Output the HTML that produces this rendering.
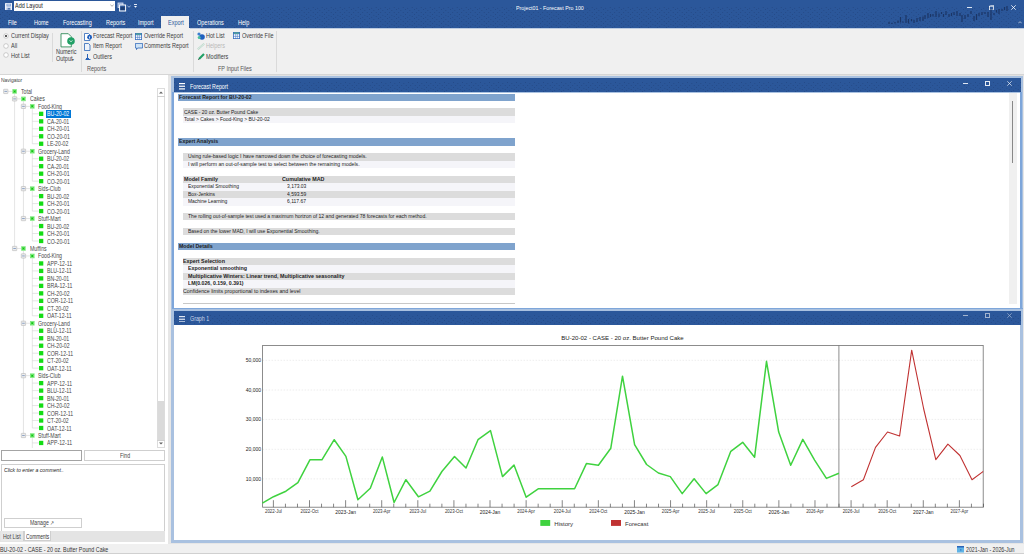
<!DOCTYPE html>
<html><head><meta charset="utf-8">
<style>
*{box-sizing:border-box;margin:0;padding:0}
html,body{width:1024px;height:554px;overflow:hidden;background:#f0f0f0;font-family:"Liberation Sans",sans-serif;color:#222}
.a{position:absolute;white-space:nowrap}
#top{left:0;top:0;width:1024px;height:28px;background:#2b579a}
#ribbon{left:0;top:28px;width:1024px;height:47px;background:#f0f0f0;border-bottom:1px solid #d6d6d6}
.tab{color:#fff;font-size:6.5px;top:18.6px;line-height:7px;transform:scaleX(.845);transform-origin:0 50%}
.rt{font-size:6.5px;color:#3c3c3c;line-height:7px;transform:scaleX(.845);transform-origin:0 50%}
#nav{left:0;top:75px;width:168px;height:469px;background:#fff}
#mdi{left:168px;top:75px;width:856px;height:470px;background:#e6e6e6}
.win{background:#fff}
.wt{background:#2b579a}
#status{left:0;top:544px;width:1024px;height:10px;background:#f0f0f0;border-bottom:1px solid #d0d0d0}
.tr{font-size:6.5px;color:#474747;line-height:7px;transform:scaleX(.8);transform-origin:0 50%}
.sq{width:4px;height:4px;background:#22dd22}
</style></head><body>
<div class="a" id="top"></div>
<svg class="a" style="left:0;top:0" width="1024" height="28" viewBox="0 0 1024 28"><defs><pattern id="dots" x="0" y="0" width="9" height="9" patternUnits="userSpaceOnUse"><g fill="#1d3a6e" fill-opacity="0.55"><circle cx="0.5" cy="0.5" r="0.5"/><circle cx="4.9" cy="1.4" r="0.5"/><circle cx="2.7" cy="3.5" r="0.5"/><circle cx="7.2" cy="3.4" r="0.5"/><circle cx="0.5" cy="5.4" r="0.5"/><circle cx="4.9" cy="6.3" r="0.5"/><circle cx="2.7" cy="8.3" r="0.5"/><circle cx="7.2" cy="7.6" r="0.5"/></g></pattern></defs><rect x="0" y="7" width="1024" height="21" fill="url(#dots)"/></svg>
<!-- title row -->
<svg class="a" style="left:4.6px;top:2.8px" width="7.3" height="7.1" viewBox="0 0 7.3 7.1"><rect x="0" y="0" width="7.3" height="7.1" rx="0.6" fill="#eef2fa"/><rect x="1.5" y="0.7" width="4.4" height="2.8" fill="#7f9fd3"/><rect x="2.2" y="1.3" width="3" height="1.2" fill="#c8d6ef"/><rect x="1.5" y="4.6" width="4.3" height="2.5" fill="#9fb5dd"/><rect x="3.2" y="5.2" width="1.6" height="1.2" fill="#2b579a"/></svg>
<div class="a" style="left:14px;top:1px;width:101px;height:10px;background:#fff"></div>
<div class="a" style="left:15.2px;top:2.2px;font-size:6.5px;line-height:7px;color:#222;transform:scaleX(.845);transform-origin:0 50%">Add Layout</div>
<svg class="a" style="left:109.5px;top:4px" width="4" height="3" viewBox="0 0 4 3"><path d="M0.3 0.5 L2 2.3 L3.7 0.5" fill="none" stroke="#777" stroke-width="0.6"/></svg>
<svg class="a" style="left:116.5px;top:1.5px" width="10" height="10" viewBox="0 0 10 10"><rect x="1" y="1" width="5" height="4.5" fill="#7f9dd0" stroke="#dfe7f5" stroke-width="0.8"/><rect x="2.6" y="3" width="6" height="6" fill="#2b579a" stroke="#fff" stroke-width="1"/><rect x="3.6" y="5" width="4" height="3" fill="#1d3f75"/></svg>
<svg class="a" style="left:127px;top:4.5px" width="4" height="3" viewBox="0 0 4 3"><path d="M0.3 0.5 L2 2.3 L3.7 0.5" fill="none" stroke="#c8d6ee" stroke-width="0.7"/></svg>
<div class="a" style="left:134.3px;top:4.2px;width:2.3px;height:0.6px;background:#e0e8f5"></div>
<svg class="a" style="left:134px;top:5.5px" width="3" height="2" viewBox="0 0 3 2"><path d="M0 0 H3 L1.5 1.8Z" fill="#fff"/></svg>
<div class="a" style="left:516px;top:3.7px;font-size:6.1px;line-height:7px;color:#fff;transform:scaleX(.87);transform-origin:0 50%">Project01 - Forecast Pro 100</div>
<!-- spark decoration -->
<svg class="a" style="left:886px;top:4px" width="126" height="24" viewBox="0 0 126 24"><rect x="2.4" y="18.0" width="1.2" height="2.0" fill="#1b3566"/><rect x="5.4" y="18.8" width="1.2" height="1.2" fill="#1b3566"/><rect x="8.4" y="18.0" width="1.2" height="1.5" fill="#1b3566"/><rect x="11.4" y="16.5" width="1.2" height="2.5" fill="#1b3566"/><rect x="13.9" y="13.0" width="1.2" height="5.5" fill="#1b3566"/><rect x="16.4" y="17.5" width="1.2" height="1.3" fill="#1b3566"/><rect x="19.4" y="11.0" width="1.2" height="8.0" fill="#1b3566"/><rect x="21.9" y="15.0" width="1.2" height="4.5" fill="#1b3566"/><rect x="24.9" y="15.0" width="1.2" height="2.0" fill="#1b3566"/><rect x="27.4" y="16.0" width="1.2" height="3.0" fill="#1b3566"/><rect x="30.4" y="14.0" width="1.2" height="4.0" fill="#1b3566"/><rect x="33.4" y="13.0" width="1.2" height="4.0" fill="#1b3566"/><rect x="36.4" y="12.5" width="1.2" height="4.5" fill="#1b3566"/><rect x="38.4" y="11.0" width="1.2" height="4.0" fill="#1b3566"/><rect x="41.4" y="9.0" width="1.2" height="5.0" fill="#1b3566"/><rect x="43.9" y="10.0" width="1.2" height="3.0" fill="#1b3566"/><rect x="46.4" y="10.0" width="1.2" height="2.5" fill="#1b3566"/><rect x="49.4" y="7.0" width="1.2" height="6.0" fill="#1b3566"/><rect x="52.4" y="9.5" width="1.2" height="3.5" fill="#1b3566"/><rect x="54.9" y="8.0" width="1.2" height="2.0" fill="#1b3566"/><rect x="56.9" y="10.0" width="1.2" height="3.0" fill="#1b3566"/><rect x="59.4" y="7.0" width="1.2" height="4.0" fill="#1b3566"/><rect x="62.4" y="10.0" width="1.2" height="3.0" fill="#1b3566"/><rect x="64.9" y="9.0" width="1.2" height="3.0" fill="#1b3566"/><rect x="67.4" y="8.0" width="1.2" height="3.0" fill="#1b3566"/><rect x="70.4" y="7.0" width="1.2" height="5.0" fill="#1b3566"/><rect x="73.4" y="9.0" width="1.2" height="3.0" fill="#1b3566"/><rect x="75.4" y="11.0" width="1.2" height="7.0" fill="#1b3566"/><rect x="78.4" y="11.0" width="1.2" height="4.0" fill="#1b3566"/><rect x="81.4" y="10.0" width="1.2" height="3.0" fill="#1b3566"/><rect x="84.4" y="7.0" width="1.2" height="3.0" fill="#1b3566"/><rect x="87.4" y="12.0" width="1.2" height="5.0" fill="#1b3566"/><rect x="89.9" y="10.0" width="1.2" height="6.0" fill="#1b3566"/><rect x="92.4" y="9.0" width="1.2" height="3.0" fill="#1b3566"/><rect x="95.4" y="8.0" width="1.2" height="3.0" fill="#1b3566"/><rect x="98.4" y="8.0" width="1.2" height="2.0" fill="#1b3566"/><rect x="101.4" y="8.0" width="1.2" height="5.0" fill="#1b3566"/><rect x="104.4" y="5.0" width="1.2" height="11.0" fill="#1b3566"/><rect x="107.4" y="9.0" width="1.2" height="2.0" fill="#1b3566"/><rect x="109.9" y="6.0" width="1.2" height="2.5" fill="#1b3566"/><rect x="112.4" y="5.0" width="1.2" height="5.0" fill="#1b3566"/><rect x="115.4" y="5.0" width="1.2" height="2.0" fill="#1b3566"/><rect x="117.9" y="3.0" width="1.2" height="3.0" fill="#1b3566"/><rect x="120.4" y="2.0" width="1.2" height="5.0" fill="#1b3566"/></svg>
<!-- window controls -->
<div class="a" style="left:967px;top:7px;width:5px;height:0.8px;background:#dde6f3"></div>
<svg class="a" style="left:988.8px;top:4.8px" width="5.5" height="5.5" viewBox="0 0 5.5 5.5"><rect x="0.4" y="1.2" width="3.9" height="3.9" fill="none" stroke="#fff" stroke-width="0.75"/><path d="M1.3 0.4 H5.1 V4.2" fill="none" stroke="#fff" stroke-width="0.6"/></svg>
<svg class="a" style="left:1010.5px;top:5px" width="5" height="5" viewBox="0 0 5 5"><path d="M0.3 0.3 L4.7 4.7 M4.7 0.3 L0.3 4.7" stroke="#fff" stroke-width="0.8"/></svg>
<svg class="a" style="left:1017.5px;top:20.5px" width="4" height="3" viewBox="0 0 4 3"><path d="M0.3 2.3 L2 0.6 L3.7 2.3" fill="none" stroke="#fff" stroke-width="0.6"/></svg>
<!-- tabs -->
<div class="a" style="left:160.9px;top:15.8px;width:28.6px;height:13px;background:#f0f0f0"></div>
<div class="a tab" style="left:7.6px">File</div>
<div class="a tab" style="left:34px">Home</div>
<div class="a tab" style="left:63px">Forecasting</div>
<div class="a tab" style="left:105.7px">Reports</div>
<div class="a tab" style="left:138px">Import</div>
<div class="a tab" style="left:168px;color:#2b579a">Export</div>
<div class="a tab" style="left:197px">Operations</div>
<div class="a tab" style="left:237.5px">Help</div>

<div class="a" id="ribbon"></div>
<div class="a" style="left:0;top:28px;width:160.9px;height:0.5px;background:#bccbe0"></div>
<div class="a" style="left:189.5px;top:28px;width:835px;height:0.5px;background:#bccbe0"></div>
<!-- radios -->
<svg class="a" style="left:3.2px;top:32.9px" width="6" height="6" viewBox="0 0 6 6"><circle cx="3" cy="3" r="2.3" fill="#fff" stroke="#a0a0a0" stroke-width="0.5"/><circle cx="3" cy="3" r="1" fill="#222"/></svg>
<svg class="a" style="left:3.2px;top:42.6px" width="6" height="6" viewBox="0 0 6 6"><circle cx="3" cy="3" r="2.3" fill="#fff" stroke="#a0a0a0" stroke-width="0.5"/></svg>
<svg class="a" style="left:3.2px;top:52.2px" width="6" height="6" viewBox="0 0 6 6"><circle cx="3" cy="3" r="2.3" fill="#fff" stroke="#a0a0a0" stroke-width="0.5"/></svg>
<div class="a rt" style="left:11.2px;top:31.9px">Current Display</div>
<div class="a rt" style="left:11.2px;top:41.7px">All</div>
<div class="a rt" style="left:11.2px;top:52.1px">Hot List</div>
<div class="a" style="left:52px;top:33px;width:0.7px;height:29px;background:#dadada"></div>
<!-- numeric output -->
<svg class="a" style="left:59.5px;top:32.5px" width="16" height="15" viewBox="0 0 16 15"><path d="M1 0.7 H8.3 L11.3 3.7 V13.9 H1 Z" fill="#fff" stroke="#1a8048" stroke-width="0.8"/><circle cx="11" cy="8" r="3.8" fill="#21a066"/><path d="M9.6 7.3 L11 8.9 L12.4 7.3" fill="none" stroke="#fff" stroke-width="0.7"/></svg>
<div class="a rt" style="left:56px;top:48.2px">Numeric</div>
<div class="a rt" style="left:56px;top:54.6px">Output<span style="font-size:4px">&#9662;</span></div>
<div class="a" style="left:80.5px;top:30.5px;width:0.7px;height:41px;background:#dadada"></div>
<!-- reports group -->
<svg class="a" style="left:84px;top:32.5px" width="9" height="8" viewBox="0 0 9 8"><path d="M0.5 0.5 H4.5 L6 2 V7.5 H0.5 Z" fill="#fff" stroke="#2b64b8" stroke-width="0.8"/><circle cx="5.6" cy="4.2" r="2.4" fill="#1f5fbf"/><rect x="5.2" y="3.4" width="0.8" height="2.1" fill="#fff"/></svg>
<div class="a rt" style="left:93px;top:31.9px">Forecast Report</div>
<svg class="a" style="left:84px;top:42.5px" width="7" height="8" viewBox="0 0 7 8"><path d="M0.5 0.5 H4.5 L6 2 V7.5 H0.5 Z" fill="#eef3fa" stroke="#2b64b8" stroke-width="0.8"/></svg>
<div class="a rt" style="left:93px;top:42.2px">Item Report</div>
<svg class="a" style="left:85px;top:53.5px" width="6" height="6" viewBox="0 0 6 6"><path d="M2.5 0 V4 M0.5 5.5 H5.5" stroke="#2b64b8" stroke-width="1"/><path d="M1 4.5 H4" stroke="#2b64b8" stroke-width="1"/></svg>
<div class="a rt" style="left:93px;top:53.2px">Outliers</div>
<svg class="a" style="left:135px;top:32.5px" width="7" height="7" viewBox="0 0 7 7"><rect x="0" y="0" width="7" height="7" fill="#3a6fc0"/><rect x="0.8" y="2.2" width="1.6" height="1.7" fill="#fff"/><rect x="2.7" y="2.2" width="1.6" height="1.7" fill="#e6eef9"/><rect x="4.6" y="2.2" width="1.6" height="1.7" fill="#fff"/><rect x="0.8" y="4.5" width="1.6" height="1.7" fill="#fff"/><rect x="2.7" y="4.5" width="1.6" height="1.7" fill="#e6eef9"/><rect x="4.6" y="4.5" width="1.6" height="1.7" fill="#fff"/><rect x="0.8" y="0.6" width="5.4" height="1" fill="#5fbf8a"/></svg>
<div class="a rt" style="left:143.8px;top:31.9px">Override Report</div>
<svg class="a" style="left:134.5px;top:43px" width="8" height="7" viewBox="0 0 8 7"><path d="M0.4 0.4 H7.6 V5 H2.5 L1.5 6.6 V5 H0.4 Z" fill="#cfe3f5" stroke="#2b64b8" stroke-width="0.8"/></svg>
<div class="a rt" style="left:143.8px;top:42.2px">Comments Report</div>
<div class="a rt" style="left:87px;top:64.8px;color:#555">Reports</div>
<div class="a" style="left:192.5px;top:30.5px;width:0.7px;height:41px;background:#dadada"></div>
<!-- FP input files -->
<svg class="a" style="left:197px;top:31.7px" width="8" height="8" viewBox="0 0 8 8"><circle cx="2" cy="2" r="1.6" fill="#3b7fd0"/><circle cx="5" cy="5" r="2.8" fill="#1f5fbf"/><circle cx="2.2" cy="5.5" r="1.5" fill="#48c0a0"/></svg>
<div class="a rt" style="left:205.8px;top:31.9px">Hot List</div>
<svg class="a" style="left:233px;top:32.2px" width="7" height="7" viewBox="0 0 7 7"><rect x="0" y="0" width="7" height="7" fill="#3a6fc0"/><rect x="0.8" y="2.2" width="1.6" height="1.7" fill="#fff"/><rect x="2.7" y="2.2" width="1.6" height="1.7" fill="#e6eef9"/><rect x="4.6" y="2.2" width="1.6" height="1.7" fill="#fff"/><rect x="0.8" y="4.5" width="1.6" height="1.7" fill="#fff"/><rect x="2.7" y="4.5" width="1.6" height="1.7" fill="#e6eef9"/><rect x="4.6" y="4.5" width="1.6" height="1.7" fill="#fff"/><rect x="0.8" y="0.6" width="5.4" height="1" fill="#5fbf8a"/></svg>
<div class="a rt" style="left:242px;top:31.9px">Override File</div>
<svg class="a" style="left:197px;top:42.8px" width="8" height="7" viewBox="0 0 8 7"><path d="M0.8 6.2 L7.2 0.8" stroke="#b9d8c9" stroke-width="1.8"/><path d="M0.8 6.2 L7.2 0.8" stroke="#e8f0ec" stroke-width="0.8"/></svg>
<div class="a rt" style="left:205.8px;top:42.2px;color:#b8b8b8">Helpers</div>
<svg class="a" style="left:197.5px;top:53px" width="7" height="7" viewBox="0 0 7 7"><path d="M1 6 L6 1" stroke="#21a066" stroke-width="2.2"/><path d="M0.3 6.7 L1.3 5.7" stroke="#333" stroke-width="1"/></svg>
<div class="a rt" style="left:205.8px;top:53px">Modifiers</div>
<div class="a rt" style="left:218.3px;top:64.8px;color:#555">FP Input Files</div>
<div class="a" style="left:276px;top:30.5px;width:0.7px;height:41px;background:#dadada"></div>


<div class="a" id="nav"></div>
<div class="a" style="left:0.8px;top:77.2px;font-size:5.9px;line-height:7px;color:#444;transform:scaleX(.84);transform-origin:0 50%">Navigator</div>
<svg class="a" style="left:0;top:86px" width="157" height="362" viewBox="0 86 157 362">
<line x1="14.60" y1="93.70" x2="14.60" y2="248.48" stroke="#d2d2d2" stroke-width="0.6"/>
<line x1="14.60" y1="98.88" x2="21.25" y2="98.88" stroke="#d2d2d2" stroke-width="0.6"/>
<line x1="23.45" y1="101.18" x2="23.45" y2="218.56" stroke="#d2d2d2" stroke-width="0.6"/>
<line x1="23.45" y1="106.36" x2="30.10" y2="106.36" stroke="#d2d2d2" stroke-width="0.6"/>
<line x1="32.30" y1="108.66" x2="32.30" y2="143.76" stroke="#d2d2d2" stroke-width="0.6"/>
<line x1="32.30" y1="113.84" x2="38.95" y2="113.84" stroke="#d2d2d2" stroke-width="0.6"/>
<line x1="32.30" y1="121.32" x2="38.95" y2="121.32" stroke="#d2d2d2" stroke-width="0.6"/>
<line x1="32.30" y1="128.80" x2="38.95" y2="128.80" stroke="#d2d2d2" stroke-width="0.6"/>
<line x1="32.30" y1="136.28" x2="38.95" y2="136.28" stroke="#d2d2d2" stroke-width="0.6"/>
<line x1="32.30" y1="143.76" x2="38.95" y2="143.76" stroke="#d2d2d2" stroke-width="0.6"/>
<line x1="23.45" y1="151.24" x2="30.10" y2="151.24" stroke="#d2d2d2" stroke-width="0.6"/>
<line x1="32.30" y1="153.54" x2="32.30" y2="181.16" stroke="#d2d2d2" stroke-width="0.6"/>
<line x1="32.30" y1="158.72" x2="38.95" y2="158.72" stroke="#d2d2d2" stroke-width="0.6"/>
<line x1="32.30" y1="166.20" x2="38.95" y2="166.20" stroke="#d2d2d2" stroke-width="0.6"/>
<line x1="32.30" y1="173.68" x2="38.95" y2="173.68" stroke="#d2d2d2" stroke-width="0.6"/>
<line x1="32.30" y1="181.16" x2="38.95" y2="181.16" stroke="#d2d2d2" stroke-width="0.6"/>
<line x1="23.45" y1="188.64" x2="30.10" y2="188.64" stroke="#d2d2d2" stroke-width="0.6"/>
<line x1="32.30" y1="190.94" x2="32.30" y2="211.08" stroke="#d2d2d2" stroke-width="0.6"/>
<line x1="32.30" y1="196.12" x2="38.95" y2="196.12" stroke="#d2d2d2" stroke-width="0.6"/>
<line x1="32.30" y1="203.60" x2="38.95" y2="203.60" stroke="#d2d2d2" stroke-width="0.6"/>
<line x1="32.30" y1="211.08" x2="38.95" y2="211.08" stroke="#d2d2d2" stroke-width="0.6"/>
<line x1="23.45" y1="218.56" x2="30.10" y2="218.56" stroke="#d2d2d2" stroke-width="0.6"/>
<line x1="32.30" y1="220.86" x2="32.30" y2="241.00" stroke="#d2d2d2" stroke-width="0.6"/>
<line x1="32.30" y1="226.04" x2="38.95" y2="226.04" stroke="#d2d2d2" stroke-width="0.6"/>
<line x1="32.30" y1="233.52" x2="38.95" y2="233.52" stroke="#d2d2d2" stroke-width="0.6"/>
<line x1="32.30" y1="241.00" x2="38.95" y2="241.00" stroke="#d2d2d2" stroke-width="0.6"/>
<line x1="14.60" y1="248.48" x2="21.25" y2="248.48" stroke="#d2d2d2" stroke-width="0.6"/>
<line x1="23.45" y1="250.78" x2="23.45" y2="435.48" stroke="#d2d2d2" stroke-width="0.6"/>
<line x1="23.45" y1="255.96" x2="30.10" y2="255.96" stroke="#d2d2d2" stroke-width="0.6"/>
<line x1="32.30" y1="258.26" x2="32.30" y2="315.80" stroke="#d2d2d2" stroke-width="0.6"/>
<line x1="32.30" y1="263.44" x2="38.95" y2="263.44" stroke="#d2d2d2" stroke-width="0.6"/>
<line x1="32.30" y1="270.92" x2="38.95" y2="270.92" stroke="#d2d2d2" stroke-width="0.6"/>
<line x1="32.30" y1="278.40" x2="38.95" y2="278.40" stroke="#d2d2d2" stroke-width="0.6"/>
<line x1="32.30" y1="285.88" x2="38.95" y2="285.88" stroke="#d2d2d2" stroke-width="0.6"/>
<line x1="32.30" y1="293.36" x2="38.95" y2="293.36" stroke="#d2d2d2" stroke-width="0.6"/>
<line x1="32.30" y1="300.84" x2="38.95" y2="300.84" stroke="#d2d2d2" stroke-width="0.6"/>
<line x1="32.30" y1="308.32" x2="38.95" y2="308.32" stroke="#d2d2d2" stroke-width="0.6"/>
<line x1="32.30" y1="315.80" x2="38.95" y2="315.80" stroke="#d2d2d2" stroke-width="0.6"/>
<line x1="23.45" y1="323.28" x2="30.10" y2="323.28" stroke="#d2d2d2" stroke-width="0.6"/>
<line x1="32.30" y1="325.58" x2="32.30" y2="368.16" stroke="#d2d2d2" stroke-width="0.6"/>
<line x1="32.30" y1="330.76" x2="38.95" y2="330.76" stroke="#d2d2d2" stroke-width="0.6"/>
<line x1="32.30" y1="338.24" x2="38.95" y2="338.24" stroke="#d2d2d2" stroke-width="0.6"/>
<line x1="32.30" y1="345.72" x2="38.95" y2="345.72" stroke="#d2d2d2" stroke-width="0.6"/>
<line x1="32.30" y1="353.20" x2="38.95" y2="353.20" stroke="#d2d2d2" stroke-width="0.6"/>
<line x1="32.30" y1="360.68" x2="38.95" y2="360.68" stroke="#d2d2d2" stroke-width="0.6"/>
<line x1="32.30" y1="368.16" x2="38.95" y2="368.16" stroke="#d2d2d2" stroke-width="0.6"/>
<line x1="23.45" y1="375.64" x2="30.10" y2="375.64" stroke="#d2d2d2" stroke-width="0.6"/>
<line x1="32.30" y1="377.94" x2="32.30" y2="428.00" stroke="#d2d2d2" stroke-width="0.6"/>
<line x1="32.30" y1="383.12" x2="38.95" y2="383.12" stroke="#d2d2d2" stroke-width="0.6"/>
<line x1="32.30" y1="390.60" x2="38.95" y2="390.60" stroke="#d2d2d2" stroke-width="0.6"/>
<line x1="32.30" y1="398.08" x2="38.95" y2="398.08" stroke="#d2d2d2" stroke-width="0.6"/>
<line x1="32.30" y1="405.56" x2="38.95" y2="405.56" stroke="#d2d2d2" stroke-width="0.6"/>
<line x1="32.30" y1="413.04" x2="38.95" y2="413.04" stroke="#d2d2d2" stroke-width="0.6"/>
<line x1="32.30" y1="420.52" x2="38.95" y2="420.52" stroke="#d2d2d2" stroke-width="0.6"/>
<line x1="32.30" y1="428.00" x2="38.95" y2="428.00" stroke="#d2d2d2" stroke-width="0.6"/>
<line x1="23.45" y1="435.48" x2="30.10" y2="435.48" stroke="#d2d2d2" stroke-width="0.6"/>
<line x1="32.30" y1="437.78" x2="32.30" y2="460.00" stroke="#d2d2d2" stroke-width="0.6"/>
<line x1="32.30" y1="442.96" x2="38.95" y2="442.96" stroke="#d2d2d2" stroke-width="0.6"/>
<line x1="5.75" y1="91.40" x2="12.40" y2="91.40" stroke="#d2d2d2" stroke-width="0.6"/>
<rect x="3.60" y="89.25" width="4.3" height="4.3" rx="0.4" fill="#eeeeee" stroke="#b0b0b0" stroke-width="0.55"/>
<line x1="4.45" y1="91.40" x2="7.05" y2="91.40" stroke="#4a6fa8" stroke-width="0.6"/>
<rect x="12.30" y="89.10" width="4.6" height="4.6" fill="#86ec86"/>
<path d="M13.20 90.00 L16.00 92.80 M16.00 90.00 L13.20 92.80" stroke="#3ad03a" stroke-width="0.7"/><circle cx="14.60" cy="91.40" r="1.0" fill="#12c412"/>
<rect x="12.45" y="96.73" width="4.3" height="4.3" rx="0.4" fill="#eeeeee" stroke="#b0b0b0" stroke-width="0.55"/>
<line x1="13.30" y1="98.88" x2="15.90" y2="98.88" stroke="#4a6fa8" stroke-width="0.6"/>
<rect x="21.15" y="96.58" width="4.6" height="4.6" fill="#86ec86"/>
<path d="M22.05 97.48 L24.85 100.28 M24.85 97.48 L22.05 100.28" stroke="#3ad03a" stroke-width="0.7"/><circle cx="23.45" cy="98.88" r="1.0" fill="#12c412"/>
<rect x="21.30" y="104.21" width="4.3" height="4.3" rx="0.4" fill="#eeeeee" stroke="#b0b0b0" stroke-width="0.55"/>
<line x1="22.15" y1="106.36" x2="24.75" y2="106.36" stroke="#4a6fa8" stroke-width="0.6"/>
<rect x="30.00" y="104.06" width="4.6" height="4.6" fill="#86ec86"/>
<path d="M30.90 104.96 L33.70 107.76 M33.70 104.96 L30.90 107.76" stroke="#3ad03a" stroke-width="0.7"/><circle cx="32.30" cy="106.36" r="1.0" fill="#12c412"/>
<rect x="39.00" y="111.69" width="4.3" height="4.3" fill="#14dc14"/>
<rect x="39.00" y="119.17" width="4.3" height="4.3" fill="#14dc14"/>
<rect x="39.00" y="126.65" width="4.3" height="4.3" fill="#14dc14"/>
<rect x="39.00" y="134.13" width="4.3" height="4.3" fill="#14dc14"/>
<rect x="39.00" y="141.61" width="4.3" height="4.3" fill="#14dc14"/>
<rect x="21.30" y="149.09" width="4.3" height="4.3" rx="0.4" fill="#eeeeee" stroke="#b0b0b0" stroke-width="0.55"/>
<line x1="22.15" y1="151.24" x2="24.75" y2="151.24" stroke="#4a6fa8" stroke-width="0.6"/>
<rect x="30.00" y="148.94" width="4.6" height="4.6" fill="#86ec86"/>
<path d="M30.90 149.84 L33.70 152.64 M33.70 149.84 L30.90 152.64" stroke="#3ad03a" stroke-width="0.7"/><circle cx="32.30" cy="151.24" r="1.0" fill="#12c412"/>
<rect x="39.00" y="156.57" width="4.3" height="4.3" fill="#14dc14"/>
<rect x="39.00" y="164.05" width="4.3" height="4.3" fill="#14dc14"/>
<rect x="39.00" y="171.53" width="4.3" height="4.3" fill="#14dc14"/>
<rect x="39.00" y="179.01" width="4.3" height="4.3" fill="#14dc14"/>
<rect x="21.30" y="186.49" width="4.3" height="4.3" rx="0.4" fill="#eeeeee" stroke="#b0b0b0" stroke-width="0.55"/>
<line x1="22.15" y1="188.64" x2="24.75" y2="188.64" stroke="#4a6fa8" stroke-width="0.6"/>
<rect x="30.00" y="186.34" width="4.6" height="4.6" fill="#86ec86"/>
<path d="M30.90 187.24 L33.70 190.04 M33.70 187.24 L30.90 190.04" stroke="#3ad03a" stroke-width="0.7"/><circle cx="32.30" cy="188.64" r="1.0" fill="#12c412"/>
<rect x="39.00" y="193.97" width="4.3" height="4.3" fill="#14dc14"/>
<rect x="39.00" y="201.45" width="4.3" height="4.3" fill="#14dc14"/>
<rect x="39.00" y="208.93" width="4.3" height="4.3" fill="#14dc14"/>
<rect x="21.30" y="216.41" width="4.3" height="4.3" rx="0.4" fill="#eeeeee" stroke="#b0b0b0" stroke-width="0.55"/>
<line x1="22.15" y1="218.56" x2="24.75" y2="218.56" stroke="#4a6fa8" stroke-width="0.6"/>
<rect x="30.00" y="216.26" width="4.6" height="4.6" fill="#86ec86"/>
<path d="M30.90 217.16 L33.70 219.96 M33.70 217.16 L30.90 219.96" stroke="#3ad03a" stroke-width="0.7"/><circle cx="32.30" cy="218.56" r="1.0" fill="#12c412"/>
<rect x="39.00" y="223.89" width="4.3" height="4.3" fill="#14dc14"/>
<rect x="39.00" y="231.37" width="4.3" height="4.3" fill="#14dc14"/>
<rect x="39.00" y="238.85" width="4.3" height="4.3" fill="#14dc14"/>
<rect x="12.45" y="246.33" width="4.3" height="4.3" rx="0.4" fill="#eeeeee" stroke="#b0b0b0" stroke-width="0.55"/>
<line x1="13.30" y1="248.48" x2="15.90" y2="248.48" stroke="#4a6fa8" stroke-width="0.6"/>
<rect x="21.15" y="246.18" width="4.6" height="4.6" fill="#86ec86"/>
<path d="M22.05 247.08 L24.85 249.88 M24.85 247.08 L22.05 249.88" stroke="#3ad03a" stroke-width="0.7"/><circle cx="23.45" cy="248.48" r="1.0" fill="#12c412"/>
<rect x="21.30" y="253.81" width="4.3" height="4.3" rx="0.4" fill="#eeeeee" stroke="#b0b0b0" stroke-width="0.55"/>
<line x1="22.15" y1="255.96" x2="24.75" y2="255.96" stroke="#4a6fa8" stroke-width="0.6"/>
<rect x="30.00" y="253.66" width="4.6" height="4.6" fill="#86ec86"/>
<path d="M30.90 254.56 L33.70 257.36 M33.70 254.56 L30.90 257.36" stroke="#3ad03a" stroke-width="0.7"/><circle cx="32.30" cy="255.96" r="1.0" fill="#12c412"/>
<rect x="39.00" y="261.29" width="4.3" height="4.3" fill="#14dc14"/>
<rect x="39.00" y="268.77" width="4.3" height="4.3" fill="#14dc14"/>
<rect x="39.00" y="276.25" width="4.3" height="4.3" fill="#14dc14"/>
<rect x="39.00" y="283.73" width="4.3" height="4.3" fill="#14dc14"/>
<rect x="39.00" y="291.21" width="4.3" height="4.3" fill="#14dc14"/>
<rect x="39.00" y="298.69" width="4.3" height="4.3" fill="#14dc14"/>
<rect x="39.00" y="306.17" width="4.3" height="4.3" fill="#14dc14"/>
<rect x="39.00" y="313.65" width="4.3" height="4.3" fill="#14dc14"/>
<rect x="21.30" y="321.13" width="4.3" height="4.3" rx="0.4" fill="#eeeeee" stroke="#b0b0b0" stroke-width="0.55"/>
<line x1="22.15" y1="323.28" x2="24.75" y2="323.28" stroke="#4a6fa8" stroke-width="0.6"/>
<rect x="30.00" y="320.98" width="4.6" height="4.6" fill="#86ec86"/>
<path d="M30.90 321.88 L33.70 324.68 M33.70 321.88 L30.90 324.68" stroke="#3ad03a" stroke-width="0.7"/><circle cx="32.30" cy="323.28" r="1.0" fill="#12c412"/>
<rect x="39.00" y="328.61" width="4.3" height="4.3" fill="#14dc14"/>
<rect x="39.00" y="336.09" width="4.3" height="4.3" fill="#14dc14"/>
<rect x="39.00" y="343.57" width="4.3" height="4.3" fill="#14dc14"/>
<rect x="39.00" y="351.05" width="4.3" height="4.3" fill="#14dc14"/>
<rect x="39.00" y="358.53" width="4.3" height="4.3" fill="#14dc14"/>
<rect x="39.00" y="366.01" width="4.3" height="4.3" fill="#14dc14"/>
<rect x="21.30" y="373.49" width="4.3" height="4.3" rx="0.4" fill="#eeeeee" stroke="#b0b0b0" stroke-width="0.55"/>
<line x1="22.15" y1="375.64" x2="24.75" y2="375.64" stroke="#4a6fa8" stroke-width="0.6"/>
<rect x="30.00" y="373.34" width="4.6" height="4.6" fill="#86ec86"/>
<path d="M30.90 374.24 L33.70 377.04 M33.70 374.24 L30.90 377.04" stroke="#3ad03a" stroke-width="0.7"/><circle cx="32.30" cy="375.64" r="1.0" fill="#12c412"/>
<rect x="39.00" y="380.97" width="4.3" height="4.3" fill="#14dc14"/>
<rect x="39.00" y="388.45" width="4.3" height="4.3" fill="#14dc14"/>
<rect x="39.00" y="395.93" width="4.3" height="4.3" fill="#14dc14"/>
<rect x="39.00" y="403.41" width="4.3" height="4.3" fill="#14dc14"/>
<rect x="39.00" y="410.89" width="4.3" height="4.3" fill="#14dc14"/>
<rect x="39.00" y="418.37" width="4.3" height="4.3" fill="#14dc14"/>
<rect x="39.00" y="425.85" width="4.3" height="4.3" fill="#14dc14"/>
<rect x="21.30" y="433.33" width="4.3" height="4.3" rx="0.4" fill="#eeeeee" stroke="#b0b0b0" stroke-width="0.55"/>
<line x1="22.15" y1="435.48" x2="24.75" y2="435.48" stroke="#4a6fa8" stroke-width="0.6"/>
<rect x="30.00" y="433.18" width="4.6" height="4.6" fill="#86ec86"/>
<path d="M30.90 434.08 L33.70 436.88 M33.70 434.08 L30.90 436.88" stroke="#3ad03a" stroke-width="0.7"/><circle cx="32.30" cy="435.48" r="1.0" fill="#12c412"/>
<rect x="39.00" y="440.81" width="4.3" height="4.3" fill="#14dc14"/>
</svg>
<div class="a" style="left:0;top:86px;width:157px;height:362px;overflow:hidden">
<div class="a tr" style="left:20.90px;top:1.90px">Total</div>
<div class="a tr" style="left:29.60px;top:9.38px">Cakes</div>
<div class="a tr" style="left:38.30px;top:16.86px">Food-King</div>
<div class="a" style="left:46.20px;top:24.14px;width:24.7px;height:7.6px;background:#0078d7"></div>
<div class="a tr" style="left:47.00px;top:24.34px;color:#fff">BU-20-02</div>
<div class="a tr" style="left:47.00px;top:31.82px">CA-20-01</div>
<div class="a tr" style="left:47.00px;top:39.30px">CH-20-01</div>
<div class="a tr" style="left:47.00px;top:46.78px">CO-20-01</div>
<div class="a tr" style="left:47.00px;top:54.26px">LE-20-02</div>
<div class="a tr" style="left:38.30px;top:61.74px">Grocery-Land</div>
<div class="a tr" style="left:47.00px;top:69.22px">BU-20-02</div>
<div class="a tr" style="left:47.00px;top:76.70px">CA-20-01</div>
<div class="a tr" style="left:47.00px;top:84.18px">CH-20-01</div>
<div class="a tr" style="left:47.00px;top:91.66px">CO-20-01</div>
<div class="a tr" style="left:38.30px;top:99.14px">Sids-Club</div>
<div class="a tr" style="left:47.00px;top:106.62px">BU-20-02</div>
<div class="a tr" style="left:47.00px;top:114.10px">CH-20-01</div>
<div class="a tr" style="left:47.00px;top:121.58px">CO-20-01</div>
<div class="a tr" style="left:38.30px;top:129.06px">Stuff-Mart</div>
<div class="a tr" style="left:47.00px;top:136.54px">BU-20-02</div>
<div class="a tr" style="left:47.00px;top:144.02px">CH-20-01</div>
<div class="a tr" style="left:47.00px;top:151.50px">CO-20-01</div>
<div class="a tr" style="left:29.60px;top:158.98px">Muffins</div>
<div class="a tr" style="left:38.30px;top:166.46px">Food-King</div>
<div class="a tr" style="left:47.00px;top:173.94px">APP-12-11</div>
<div class="a tr" style="left:47.00px;top:181.42px">BLU-12-11</div>
<div class="a tr" style="left:47.00px;top:188.90px">BN-20-01</div>
<div class="a tr" style="left:47.00px;top:196.38px">BRA-12-11</div>
<div class="a tr" style="left:47.00px;top:203.86px">CH-20-02</div>
<div class="a tr" style="left:47.00px;top:211.34px">COR-12-11</div>
<div class="a tr" style="left:47.00px;top:218.82px">CT-20-02</div>
<div class="a tr" style="left:47.00px;top:226.30px">OAT-12-11</div>
<div class="a tr" style="left:38.30px;top:233.78px">Grocery-Land</div>
<div class="a tr" style="left:47.00px;top:241.26px">BLU-12-11</div>
<div class="a tr" style="left:47.00px;top:248.74px">BN-20-01</div>
<div class="a tr" style="left:47.00px;top:256.22px">CH-20-02</div>
<div class="a tr" style="left:47.00px;top:263.70px">COR-12-11</div>
<div class="a tr" style="left:47.00px;top:271.18px">CT-20-02</div>
<div class="a tr" style="left:47.00px;top:278.66px">OAT-12-11</div>
<div class="a tr" style="left:38.30px;top:286.14px">Sids-Club</div>
<div class="a tr" style="left:47.00px;top:293.62px">APP-12-11</div>
<div class="a tr" style="left:47.00px;top:301.10px">BLU-12-11</div>
<div class="a tr" style="left:47.00px;top:308.58px">BN-20-01</div>
<div class="a tr" style="left:47.00px;top:316.06px">CH-20-02</div>
<div class="a tr" style="left:47.00px;top:323.54px">COR-12-11</div>
<div class="a tr" style="left:47.00px;top:331.02px">CT-20-02</div>
<div class="a tr" style="left:47.00px;top:338.50px">OAT-12-11</div>
<div class="a tr" style="left:38.30px;top:345.98px">Stuff-Mart</div>
<div class="a tr" style="left:47.00px;top:353.46px">APP-12-11</div>
</div>
<div class="a" style="left:157px;top:88px;width:8px;height:360px;background:#fff;border:0.6px solid #dcdcdc"></div>
<div class="a" style="left:157.6px;top:401.3px;width:6.8px;height:38.5px;background:#dadada"></div>
<div class="a" style="left:157px;top:95.7px;width:8px;height:0.6px;background:#d0d0d0"></div>
<svg class="a" style="left:159px;top:90.5px" width="4" height="3" viewBox="0 0 4 3"><path d="M0 2.6 L2 0.4 L4 2.6Z" fill="#606060"/></svg>
<div class="a" style="left:157px;top:439.8px;width:8px;height:0.6px;background:#d0d0d0"></div>
<svg class="a" style="left:159px;top:442.3px" width="4" height="3" viewBox="0 0 4 3"><path d="M0 0.4 L2 2.6 L4 0.4Z" fill="#606060"/></svg>
<div class="a" style="left:0.5px;top:450.3px;width:81.3px;height:10.4px;background:#fff;border:0.6px solid #a4a4a4"></div>
<div class="a" style="left:83.5px;top:450.3px;width:81.5px;height:10.4px;background:#fff;border:0.6px solid #cfcfcf"></div>
<div class="a tr" style="left:119.5px;top:451.8px;color:#444">Find</div>
<div class="a" style="left:0.5px;top:463.5px;width:164.5px;height:68px;background:#fff;border:0.6px solid #cfcfcf"></div>
<div class="a" style="left:4.4px;top:466.8px;font-size:5.6px;line-height:7px;font-style:italic;color:#222;transform:scaleX(.92);transform-origin:0 50%">Click to enter a comment..</div>
<div class="a" style="left:4.4px;top:517.6px;width:77.4px;height:10.6px;background:#fff;border:0.6px solid #cfcfcf"></div>
<div class="a tr" style="left:30.3px;top:518.8px;color:#444">Manage <span style="font-size:5.5px">&#x2197;</span></div>
<div class="a" style="left:0;top:531.4px;width:165px;height:10.2px;background:#e4e4e4"></div>
<div class="a" style="left:1px;top:531.4px;width:22.5px;height:9.6px;background:#e8e8e8;border-right:0.6px solid #cfcfcf"></div>
<div class="a" style="left:23.5px;top:531.4px;width:27.8px;height:9.8px;background:#fff;border:0.6px solid #cfcfcf;border-top:none"></div>
<div class="a tr" style="left:2.8px;top:532.6px;color:#444">Hot List</div>
<div class="a tr" style="left:25.8px;top:532.6px;color:#333;transform:scaleX(.74)">Comments</div>
<div class="a" id="mdi"></div>
<div class="a" style="left:168px;top:75px;width:856px;height:1px;background:#e2e2e2"></div>
<div class="a" style="left:171px;top:76px;width:852px;height:233.5px;background:#a9c1e0"></div>
<div class="a" style="left:171.5px;top:92px;width:2.5px;height:217px;background:#7ea6da"></div>
<div class="a wt" style="left:174px;top:78px;width:847px;height:14px"></div>
<svg class="a" style="left:174px;top:82px" width="847" height="10" viewBox="0 0 847 10"><rect x="0" y="0" width="847" height="10" fill="url(#dots)"/></svg>
<div class="a win" style="left:174px;top:93px;width:846px;height:214.7px"></div>
<div class="a" style="left:171.5px;top:307.7px;width:851px;height:1.8px;background:#7ea6da"></div>
<div class="a" style="left:1020.2px;top:92px;width:1.8px;height:217px;background:#7ea6da"></div>
<svg class="a" style="left:178.7px;top:83.2px" width="6.5" height="6.5" viewBox="0 0 6.5 6.5"><rect y="0" width="6.5" height="1.2" fill="#fff"/><rect y="2.65" width="6.5" height="1.2" fill="#fff"/><rect y="5.3" width="6.5" height="1.2" fill="#fff"/></svg>
<div class="a" style="left:189.6px;top:82.5px;font-size:6.6px;line-height:7px;color:#fff;transform:scaleX(.805);transform-origin:0 50%">Forecast Report</div>
<div class="a" style="left:963.3px;top:83px;width:4.7px;height:0.7px;background:#dfe6f2"></div>
<div class="a" style="left:985px;top:81px;width:4.6px;height:4.6px;border:0.65px solid #e6ecf5"></div>
<svg class="a" style="left:1007px;top:81px" width="5" height="5" viewBox="0 0 5 5"><path d="M0.3 0.3 L4.7 4.7 M4.7 0.3 L0.3 4.7" stroke="#eef2f8" stroke-width="0.7"/></svg>
<div class="a" style="left:1009px;top:93px;width:8px;height:210.7px;background:#f0f0f0"></div>
<div class="a" style="left:1012.2px;top:100.5px;width:0.8px;height:62.5px;background:#888"></div>
<div class="a" style="left:178px;top:93.50px;width:337px;height:7.47px;background:#7fa3cd"></div>
<div class="a" style="left:178.9px;top:93.64px;font-size:5.7px;line-height:7px;font-weight:bold;color:#1a1a1a;transform:scaleX(.92);transform-origin:0 50%">Forecast Report for BU-20-02</div>
<div class="a" style="left:183.2px;top:108.44px;width:331.80px;height:7.47px;background:#dcdcdc"></div>
<div class="a" style="left:184px;top:108.58px;font-size:5.7px;line-height:7px;color:#222;transform:scaleX(0.866);transform-origin:0 50%">CASE - 20 oz. Butter Pound Cake</div>
<div class="a" style="left:183.2px;top:115.91px;width:331.80px;height:7.47px;background:#f5f5f9"></div>
<div class="a" style="left:184px;top:116.05px;font-size:5.7px;line-height:7px;color:#222;transform:scaleX(0.874);transform-origin:0 50%">Total &gt; Cakes &gt; Food-King &gt; BU-20-02</div>
<div class="a" style="left:178px;top:138.32px;width:337px;height:7.47px;background:#7fa3cd"></div>
<div class="a" style="left:178.9px;top:138.46px;font-size:5.7px;line-height:7px;font-weight:bold;color:#1a1a1a;transform:scaleX(.92);transform-origin:0 50%">Expert Analysis</div>
<div class="a" style="left:183.2px;top:153.26px;width:331.80px;height:7.47px;background:#dcdcdc"></div>
<div class="a" style="left:188.4px;top:153.40px;font-size:5.7px;line-height:7px;color:#222;transform:scaleX(0.9);transform-origin:0 50%">Using rule-based logic I have narrowed down the choice of forecasting models.</div>
<div class="a" style="left:183.2px;top:160.73px;width:331.80px;height:7.47px;background:#f5f5f9"></div>
<div class="a" style="left:188.4px;top:160.87px;font-size:5.7px;line-height:7px;color:#222;transform:scaleX(0.9);transform-origin:0 50%">I will perform an out-of-sample test to select between the remaining models.</div>
<div class="a" style="left:183.2px;top:175.67px;width:331.80px;height:7.47px;background:#dcdcdc"></div>
<div class="a" style="left:183.7px;top:175.81px;font-size:5.7px;line-height:7px;font-weight:bold;color:#222;transform:scaleX(0.94);transform-origin:0 50%">Model Family</div>
<div class="a" style="left:281.8px;top:175.81px;font-size:5.7px;line-height:7px;font-weight:bold;color:#222;transform:scaleX(0.94);transform-origin:0 50%">Cumulative MAD</div>
<div class="a" style="left:183.2px;top:183.14px;width:331.80px;height:7.47px;background:#f5f5f9"></div>
<div class="a" style="left:188.4px;top:183.28px;font-size:5.7px;line-height:7px;color:#222;transform:scaleX(0.87);transform-origin:0 50%">Exponential Smoothing</div>
<div class="a" style="left:286.8px;top:183.28px;font-size:5.7px;line-height:7px;color:#222;transform:scaleX(0.87);transform-origin:0 50%">3,173.03</div>
<div class="a" style="left:183.2px;top:190.61px;width:331.80px;height:7.47px;background:#dcdcdc"></div>
<div class="a" style="left:188.4px;top:190.75px;font-size:5.7px;line-height:7px;color:#222;transform:scaleX(0.87);transform-origin:0 50%">Box-Jenkins</div>
<div class="a" style="left:286.8px;top:190.75px;font-size:5.7px;line-height:7px;color:#222;transform:scaleX(0.87);transform-origin:0 50%">4,593.59</div>
<div class="a" style="left:183.2px;top:198.08px;width:331.80px;height:7.47px;background:#f5f5f9"></div>
<div class="a" style="left:188.4px;top:198.22px;font-size:5.7px;line-height:7px;color:#222;transform:scaleX(0.87);transform-origin:0 50%">Machine Learning</div>
<div class="a" style="left:286.8px;top:198.22px;font-size:5.7px;line-height:7px;color:#222;transform:scaleX(0.87);transform-origin:0 50%">6,117.67</div>
<div class="a" style="left:183.2px;top:213.02px;width:331.80px;height:7.47px;background:#dcdcdc"></div>
<div class="a" style="left:188.4px;top:213.16px;font-size:5.7px;line-height:7px;color:#222;transform:scaleX(0.89);transform-origin:0 50%">The rolling out-of-sample test used a maximum horizon of 12 and generated 78 forecasts for each method.</div>
<div class="a" style="left:183.2px;top:227.96px;width:331.80px;height:7.47px;background:#dcdcdc"></div>
<div class="a" style="left:188.4px;top:228.09px;font-size:5.7px;line-height:7px;color:#222;transform:scaleX(0.88);transform-origin:0 50%">Based on the lower MAD, I will use Exponential Smoothing.</div>
<div class="a" style="left:178px;top:242.90px;width:337px;height:7.47px;background:#7fa3cd"></div>
<div class="a" style="left:178.9px;top:243.03px;font-size:5.7px;line-height:7px;font-weight:bold;color:#1a1a1a;transform:scaleX(.92);transform-origin:0 50%">Model Details</div>
<div class="a" style="left:183.2px;top:257.84px;width:331.80px;height:7.47px;background:#dcdcdc"></div>
<div class="a" style="left:183.4px;top:257.98px;font-size:5.7px;line-height:7px;font-weight:bold;color:#222;transform:scaleX(0.94);transform-origin:0 50%">Expert Selection</div>
<div class="a" style="left:183.2px;top:265.31px;width:331.80px;height:7.47px;background:#f5f5f9"></div>
<div class="a" style="left:188.4px;top:265.44px;font-size:5.7px;line-height:7px;font-weight:bold;color:#222;transform:scaleX(0.94);transform-origin:0 50%">Exponential smoothing</div>
<div class="a" style="left:183.2px;top:272.78px;width:331.80px;height:7.47px;background:#dcdcdc"></div>
<div class="a" style="left:188.4px;top:272.91px;font-size:5.7px;line-height:7px;font-weight:bold;color:#222;transform:scaleX(0.94);transform-origin:0 50%">Multiplicative Winters: Linear trend, Multiplicative seasonality</div>
<div class="a" style="left:183.2px;top:280.25px;width:331.80px;height:7.47px;background:#f5f5f9"></div>
<div class="a" style="left:188.4px;top:280.38px;font-size:5.7px;line-height:7px;font-weight:bold;color:#222;transform:scaleX(0.91);transform-origin:0 50%">LM(0.026, 0.159, 0.391)</div>
<div class="a" style="left:183.2px;top:287.72px;width:331.80px;height:7.47px;background:#dcdcdc"></div>
<div class="a" style="left:183.4px;top:287.86px;font-size:5.7px;line-height:7px;color:#222;transform:scaleX(0.927);transform-origin:0 50%">Confidence limits proportional to indexes and level</div>
<div class="a" style="left:183.4px;top:302.8px;width:331.5px;height:0.7px;background:#c8c8c8"></div>
<div class="a" style="left:171px;top:309.5px;width:852px;height:233.2px;background:#a9c1e0"></div>
<div class="a wt" style="left:174px;top:311px;width:847px;height:13.7px"></div>
<svg class="a" style="left:174px;top:315px" width="847" height="9" viewBox="0 0 847 9"><rect x="0" y="0" width="847" height="9" fill="url(#dots)"/></svg>
<div class="a win" style="left:174px;top:324.7px;width:846px;height:215.6px"></div>
<svg class="a" style="left:178.8px;top:315.6px" width="6.5" height="6.5" viewBox="0 0 6.5 6.5"><rect y="0" width="6.5" height="1.2" fill="#dfe6f2"/><rect y="2.65" width="6.5" height="1.2" fill="#dfe6f2"/><rect y="5.3" width="6.5" height="1.2" fill="#dfe6f2"/></svg>
<div class="a" style="left:189.5px;top:314.5px;font-size:6.6px;line-height:7px;color:#c9d5ea;transform:scaleX(.805);transform-origin:0 50%">Graph 1</div>
<div class="a" style="left:963.3px;top:315px;width:4.7px;height:0.6px;background:#a3b4cf"></div>
<div class="a" style="left:985px;top:313.4px;width:4.5px;height:4.5px;border:0.6px solid #a3b4cf"></div>
<svg class="a" style="left:1007px;top:313.4px" width="5" height="5" viewBox="0 0 5 5"><path d="M0.3 0.3 L4.7 4.7 M4.7 0.3 L0.3 4.7" stroke="#a9b9d2" stroke-width="0.65"/></svg>
<svg class="a" style="left:0;top:0" width="1024" height="554" viewBox="0 0 1024 554">
<line x1="262.6" y1="360.3" x2="983.2" y2="360.3" stroke="#e0e0e0" stroke-width="0.6" stroke-dasharray="1.5 1.5"/>
<text x="261" y="362.1" text-anchor="end" font-family="Liberation Sans" font-size="5.0" fill="#222">50,000</text>
<line x1="262.6" y1="390.0" x2="983.2" y2="390.0" stroke="#e0e0e0" stroke-width="0.6" stroke-dasharray="1.5 1.5"/>
<text x="261" y="391.8" text-anchor="end" font-family="Liberation Sans" font-size="5.0" fill="#222">40,000</text>
<line x1="262.6" y1="419.4" x2="983.2" y2="419.4" stroke="#e0e0e0" stroke-width="0.6" stroke-dasharray="1.5 1.5"/>
<text x="261" y="421.2" text-anchor="end" font-family="Liberation Sans" font-size="5.0" fill="#222">30,000</text>
<line x1="262.6" y1="449.3" x2="983.2" y2="449.3" stroke="#e0e0e0" stroke-width="0.6" stroke-dasharray="1.5 1.5"/>
<text x="261" y="451.1" text-anchor="end" font-family="Liberation Sans" font-size="5.0" fill="#222">20,000</text>
<line x1="262.6" y1="478.9" x2="983.2" y2="478.9" stroke="#e0e0e0" stroke-width="0.6" stroke-dasharray="1.5 1.5"/>
<text x="261" y="480.7" text-anchor="end" font-family="Liberation Sans" font-size="5.0" fill="#222">10,000</text>
<rect x="262.6" y="345.5" width="720.6" height="161.7" fill="none" stroke="#707070" stroke-width="0.8"/>
<line x1="838.9" y1="345.5" x2="838.9" y2="507.2" stroke="#707070" stroke-width="0.8"/>
<line x1="273.40" y1="500.2" x2="273.40" y2="507.2" stroke="#444" stroke-width="0.65"/>
<text x="265.00" y="512.9" font-family="Liberation Sans" font-size="5.4" fill="#333" textLength="16.8" lengthAdjust="spacingAndGlyphs">2022-Jul</text>
<line x1="285.44" y1="503.7" x2="285.44" y2="507.2" stroke="#444" stroke-width="0.65"/>
<line x1="297.47" y1="503.7" x2="297.47" y2="507.2" stroke="#444" stroke-width="0.65"/>
<line x1="309.50" y1="500.2" x2="309.50" y2="507.2" stroke="#444" stroke-width="0.65"/>
<text x="300.50" y="512.9" font-family="Liberation Sans" font-size="5.4" fill="#333" textLength="18" lengthAdjust="spacingAndGlyphs">2022-Oct</text>
<line x1="321.54" y1="503.7" x2="321.54" y2="507.2" stroke="#444" stroke-width="0.65"/>
<line x1="333.57" y1="503.7" x2="333.57" y2="507.2" stroke="#444" stroke-width="0.65"/>
<line x1="345.61" y1="500.2" x2="345.61" y2="507.2" stroke="#444" stroke-width="0.65"/>
<text x="345.61" y="513.9" text-anchor="middle" font-family="Liberation Sans" font-size="4.95" fill="#222">2023-Jan</text>
<line x1="357.64" y1="503.7" x2="357.64" y2="507.2" stroke="#444" stroke-width="0.65"/>
<line x1="369.68" y1="503.7" x2="369.68" y2="507.2" stroke="#444" stroke-width="0.65"/>
<line x1="381.71" y1="500.2" x2="381.71" y2="507.2" stroke="#444" stroke-width="0.65"/>
<text x="372.91" y="512.9" font-family="Liberation Sans" font-size="5.4" fill="#333" textLength="17.6" lengthAdjust="spacingAndGlyphs">2023-Apr</text>
<line x1="393.75" y1="503.7" x2="393.75" y2="507.2" stroke="#444" stroke-width="0.65"/>
<line x1="405.78" y1="503.7" x2="405.78" y2="507.2" stroke="#444" stroke-width="0.65"/>
<line x1="417.82" y1="500.2" x2="417.82" y2="507.2" stroke="#444" stroke-width="0.65"/>
<text x="409.42" y="512.9" font-family="Liberation Sans" font-size="5.4" fill="#333" textLength="16.8" lengthAdjust="spacingAndGlyphs">2023-Jul</text>
<line x1="429.86" y1="503.7" x2="429.86" y2="507.2" stroke="#444" stroke-width="0.65"/>
<line x1="441.89" y1="503.7" x2="441.89" y2="507.2" stroke="#444" stroke-width="0.65"/>
<line x1="453.92" y1="500.2" x2="453.92" y2="507.2" stroke="#444" stroke-width="0.65"/>
<text x="444.92" y="512.9" font-family="Liberation Sans" font-size="5.4" fill="#333" textLength="18" lengthAdjust="spacingAndGlyphs">2023-Oct</text>
<line x1="465.96" y1="503.7" x2="465.96" y2="507.2" stroke="#444" stroke-width="0.65"/>
<line x1="478.00" y1="503.7" x2="478.00" y2="507.2" stroke="#444" stroke-width="0.65"/>
<line x1="490.03" y1="500.2" x2="490.03" y2="507.2" stroke="#444" stroke-width="0.65"/>
<text x="490.03" y="513.9" text-anchor="middle" font-family="Liberation Sans" font-size="4.95" fill="#222">2024-Jan</text>
<line x1="502.06" y1="503.7" x2="502.06" y2="507.2" stroke="#444" stroke-width="0.65"/>
<line x1="514.10" y1="503.7" x2="514.10" y2="507.2" stroke="#444" stroke-width="0.65"/>
<line x1="526.13" y1="500.2" x2="526.13" y2="507.2" stroke="#444" stroke-width="0.65"/>
<text x="517.34" y="512.9" font-family="Liberation Sans" font-size="5.4" fill="#333" textLength="17.6" lengthAdjust="spacingAndGlyphs">2024-Apr</text>
<line x1="538.17" y1="503.7" x2="538.17" y2="507.2" stroke="#444" stroke-width="0.65"/>
<line x1="550.20" y1="503.7" x2="550.20" y2="507.2" stroke="#444" stroke-width="0.65"/>
<line x1="562.24" y1="500.2" x2="562.24" y2="507.2" stroke="#444" stroke-width="0.65"/>
<text x="553.84" y="512.9" font-family="Liberation Sans" font-size="5.4" fill="#333" textLength="16.8" lengthAdjust="spacingAndGlyphs">2024-Jul</text>
<line x1="574.27" y1="503.7" x2="574.27" y2="507.2" stroke="#444" stroke-width="0.65"/>
<line x1="586.31" y1="503.7" x2="586.31" y2="507.2" stroke="#444" stroke-width="0.65"/>
<line x1="598.35" y1="500.2" x2="598.35" y2="507.2" stroke="#444" stroke-width="0.65"/>
<text x="589.35" y="512.9" font-family="Liberation Sans" font-size="5.4" fill="#333" textLength="18" lengthAdjust="spacingAndGlyphs">2024-Oct</text>
<line x1="610.38" y1="503.7" x2="610.38" y2="507.2" stroke="#444" stroke-width="0.65"/>
<line x1="622.41" y1="503.7" x2="622.41" y2="507.2" stroke="#444" stroke-width="0.65"/>
<line x1="634.45" y1="500.2" x2="634.45" y2="507.2" stroke="#444" stroke-width="0.65"/>
<text x="634.45" y="513.9" text-anchor="middle" font-family="Liberation Sans" font-size="4.95" fill="#222">2025-Jan</text>
<line x1="646.48" y1="503.7" x2="646.48" y2="507.2" stroke="#444" stroke-width="0.65"/>
<line x1="658.52" y1="503.7" x2="658.52" y2="507.2" stroke="#444" stroke-width="0.65"/>
<line x1="670.56" y1="500.2" x2="670.56" y2="507.2" stroke="#444" stroke-width="0.65"/>
<text x="661.76" y="512.9" font-family="Liberation Sans" font-size="5.4" fill="#333" textLength="17.6" lengthAdjust="spacingAndGlyphs">2025-Apr</text>
<line x1="682.59" y1="503.7" x2="682.59" y2="507.2" stroke="#444" stroke-width="0.65"/>
<line x1="694.62" y1="503.7" x2="694.62" y2="507.2" stroke="#444" stroke-width="0.65"/>
<line x1="706.66" y1="500.2" x2="706.66" y2="507.2" stroke="#444" stroke-width="0.65"/>
<text x="698.26" y="512.9" font-family="Liberation Sans" font-size="5.4" fill="#333" textLength="16.8" lengthAdjust="spacingAndGlyphs">2025-Jul</text>
<line x1="718.69" y1="503.7" x2="718.69" y2="507.2" stroke="#444" stroke-width="0.65"/>
<line x1="730.73" y1="503.7" x2="730.73" y2="507.2" stroke="#444" stroke-width="0.65"/>
<line x1="742.76" y1="500.2" x2="742.76" y2="507.2" stroke="#444" stroke-width="0.65"/>
<text x="733.76" y="512.9" font-family="Liberation Sans" font-size="5.4" fill="#333" textLength="18" lengthAdjust="spacingAndGlyphs">2025-Oct</text>
<line x1="754.80" y1="503.7" x2="754.80" y2="507.2" stroke="#444" stroke-width="0.65"/>
<line x1="766.84" y1="503.7" x2="766.84" y2="507.2" stroke="#444" stroke-width="0.65"/>
<line x1="778.87" y1="500.2" x2="778.87" y2="507.2" stroke="#444" stroke-width="0.65"/>
<text x="778.87" y="513.9" text-anchor="middle" font-family="Liberation Sans" font-size="4.95" fill="#222">2026-Jan</text>
<line x1="790.90" y1="503.7" x2="790.90" y2="507.2" stroke="#444" stroke-width="0.65"/>
<line x1="802.94" y1="503.7" x2="802.94" y2="507.2" stroke="#444" stroke-width="0.65"/>
<line x1="814.98" y1="500.2" x2="814.98" y2="507.2" stroke="#444" stroke-width="0.65"/>
<text x="806.18" y="512.9" font-family="Liberation Sans" font-size="5.4" fill="#333" textLength="17.6" lengthAdjust="spacingAndGlyphs">2026-Apr</text>
<line x1="827.01" y1="503.7" x2="827.01" y2="507.2" stroke="#444" stroke-width="0.65"/>
<line x1="839.04" y1="503.7" x2="839.04" y2="507.2" stroke="#444" stroke-width="0.65"/>
<line x1="851.08" y1="500.2" x2="851.08" y2="507.2" stroke="#444" stroke-width="0.65"/>
<text x="842.68" y="512.9" font-family="Liberation Sans" font-size="5.4" fill="#333" textLength="16.8" lengthAdjust="spacingAndGlyphs">2026-Jul</text>
<line x1="863.12" y1="503.7" x2="863.12" y2="507.2" stroke="#444" stroke-width="0.65"/>
<line x1="875.15" y1="503.7" x2="875.15" y2="507.2" stroke="#444" stroke-width="0.65"/>
<line x1="887.18" y1="500.2" x2="887.18" y2="507.2" stroke="#444" stroke-width="0.65"/>
<text x="878.18" y="512.9" font-family="Liberation Sans" font-size="5.4" fill="#333" textLength="18" lengthAdjust="spacingAndGlyphs">2026-Oct</text>
<line x1="899.22" y1="503.7" x2="899.22" y2="507.2" stroke="#444" stroke-width="0.65"/>
<line x1="911.25" y1="503.7" x2="911.25" y2="507.2" stroke="#444" stroke-width="0.65"/>
<line x1="923.29" y1="500.2" x2="923.29" y2="507.2" stroke="#444" stroke-width="0.65"/>
<text x="923.29" y="513.9" text-anchor="middle" font-family="Liberation Sans" font-size="4.95" fill="#222">2027-Jan</text>
<line x1="935.32" y1="503.7" x2="935.32" y2="507.2" stroke="#444" stroke-width="0.65"/>
<line x1="947.36" y1="503.7" x2="947.36" y2="507.2" stroke="#444" stroke-width="0.65"/>
<line x1="959.39" y1="500.2" x2="959.39" y2="507.2" stroke="#444" stroke-width="0.65"/>
<text x="950.60" y="512.9" font-family="Liberation Sans" font-size="5.4" fill="#333" textLength="17.6" lengthAdjust="spacingAndGlyphs">2027-Apr</text>
<line x1="971.43" y1="503.7" x2="971.43" y2="507.2" stroke="#444" stroke-width="0.65"/>
<line x1="983.47" y1="503.7" x2="983.47" y2="507.2" stroke="#444" stroke-width="0.65"/>
<polyline points="262.4,503.2 273.5,496.7 285.9,491.2 297.9,482.6 309.9,459.8 321.9,459.8 334.2,439.7 345.9,456.4 357.9,499.8 370.3,488.3 382.3,456.9 394.1,502.5 405.9,479.7 418.4,496.8 429.9,491.2 441.9,471.5 454.5,456.5 466,468 478,439.7 490.5,430.6 502.5,476.6 514,465.1 526.2,497.2 538.2,488.8 550.6,488.8 562.6,488.8 574.6,488.8 586.4,463.6 598.4,465.3 610.8,448.2 622.5,376.2 634.6,444.6 646.6,464.5 658.4,473 670.3,476.6 682.2,493.6 694.1,478.7 706.1,493.6 718,484.6 730.8,451.3 742.7,442.3 754.6,457.2 766.5,361.3 778.7,432.1 790.7,465.3 802.8,439.4 814.6,460.1 826.4,478.4 838.9,473.2" fill="none" stroke="#3fd23f" stroke-width="1.5" stroke-linejoin="round"/>
<clipPath id="cp"><rect x="262.6" y="345.5" width="720.6" height="161.7"/></clipPath>
<polyline points="851.3,486.7 863.4,479.8 875.5,447.4 887.5,432 899.6,436 911.7,350.2 923.7,409 935.8,459.6 947.9,444.2 959.9,455.5 972,479.8 984,470.9" fill="none" stroke="#c03232" stroke-width="1.1" stroke-linejoin="round" clip-path="url(#cp)"/>
<text x="622.5" y="340.2" text-anchor="middle" font-family="Liberation Sans" font-size="6.05" fill="#222">BU-20-02 - CASE - 20 oz. Butter Pound Cake</text>
<rect x="540.3" y="520" width="9.9" height="5.9" fill="#3fd23f"/>
<text x="554.3" y="525.6" font-family="Liberation Sans" font-size="6.05" fill="#333">History</text>
<rect x="611" y="520" width="10" height="5.9" fill="#c03232"/>
<text x="625" y="525.6" font-family="Liberation Sans" font-size="6.0" fill="#333">Forecast</text>
</svg>
<div class="a" id="status"></div>
<div class="a" style="left:0.3px;top:546.2px;font-size:6.3px;line-height:7px;color:#333;transform:scaleX(.85);transform-origin:0 50%">BU-20-02 - CASE - 20 oz. Butter Pound Cake</div>
<svg class="a" style="left:957px;top:546.3px" width="7.2" height="6.5" viewBox="0 0 7.2 6.5"><rect x="0" y="0" width="7.2" height="6.5" fill="#5fb3e6"/><rect x="0" y="0" width="7.2" height="1.5" fill="#2a64b8"/><rect x="3.2" y="3.3" width="1.2" height="1.2" fill="#2a64b8"/></svg>
<div class="a" style="left:965.8px;top:545.9px;font-size:6.3px;line-height:7px;color:#333;transform:scaleX(.835);transform-origin:0 50%">2021-Jan - 2026-Jun</div>
</body></html>
